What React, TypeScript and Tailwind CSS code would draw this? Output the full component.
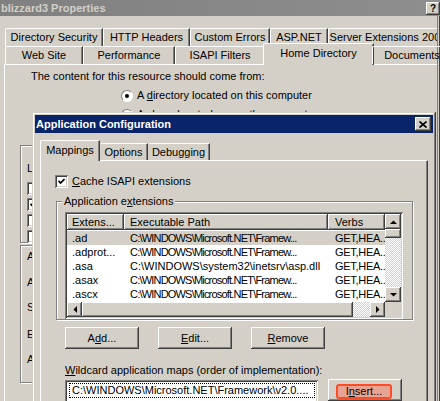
import React from "react";

const RAISED =
  "shadow-[inset_-1px_-1px_#404040,inset_1px_1px_#ffffff,inset_-2px_-2px_#808080,inset_2px_2px_#d4d0c8]";
const SUNKEN =
  "shadow-[inset_1px_1px_#808080,inset_-1px_-1px_#ffffff,inset_2px_2px_#404040,inset_-2px_-2px_#d4d0c8]";
const FRAME =
  "shadow-[inset_-1px_-1px_#404040,inset_1px_1px_#d4d0c8,inset_-2px_-2px_#808080,inset_2px_2px_#ffffff]";
const ETCHED = "border border-[#808080] shadow-[inset_1px_1px_#ffffff,1px_1px_#ffffff]";
const DITHER =
  "bg-[image:repeating-conic-gradient(#ffffff_0%_25%,#d4d0c8_0%_50%)] bg-[length:2px_2px]";
const TAB =
  "border-t border-l border-white rounded-tl-[2px] border-r border-r-[#404040] shadow-[inset_-1px_0_#808080]";

type Dir = "up" | "down" | "left" | "right";

const Arrow: React.FC<{ dir: Dir }> = ({ dir }) => {
  const pts: Record<Dir, string> = {
    up: "0,4 7,4 3.5,0.5",
    down: "0,0 7,0 3.5,3.5",
    left: "4,0 4,7 0.5,3.5",
    right: "0,0 0,7 3.5,3.5",
  };
  const vertical = dir === "up" || dir === "down";
  return (
    <svg width={vertical ? 7 : 4} height={vertical ? 4 : 7} viewBox={vertical ? "0 0 7 4" : "0 0 4 7"}>
      <polygon points={pts[dir]} fill="#000" />
    </svg>
  );
};

const ScrollBtn: React.FC<{ dir: Dir; className?: string }> = ({ dir, className = "" }) => (
  <div className={`flex items-center justify-center bg-[#d4d0c8] ${RAISED} ${className}`}>
    <Arrow dir={dir} />
  </div>
);

const CheckBox: React.FC<{ checked?: boolean }> = ({ checked }) => (
  <div className={`w-[13px] h-[13px] bg-white flex items-center justify-center shrink-0 ${SUNKEN}`}>
    {checked && (
      <svg width="7" height="7" viewBox="0 0 7 7">
        <path d="M0.5 2.8 L2.6 5 L6.5 1" stroke="#000" strokeWidth="1.7" fill="none" />
      </svg>
    )}
  </div>
);

const Radio: React.FC<{ checked?: boolean }> = ({ checked }) => (
  <div className="w-[12px] h-[12px] rounded-full bg-white border border-t-[#808080] border-l-[#808080] border-r-white border-b-white flex items-center justify-center shrink-0">
    {checked && <div className="w-[4px] h-[4px] rounded-full bg-black" />}
  </div>
);

const Button: React.FC<{ children: React.ReactNode }> = ({ children }) => (
  <div className={`w-[74px] h-[22px] flex items-center justify-center bg-[#d4d0c8] ${RAISED}`}>
    {children}
  </div>
);

const backRow = [
  { label: "Directory Security", w: 98 },
  { label: "HTTP Headers", w: 87 },
  { label: "Custom Errors", w: 80 },
  { label: "ASP.NET", w: 58 },
  { label: "Server Extensions 2002", w: 120 },
];

const frontRow = [
  { label: "Web Site", w: 78 },
  { label: "Performance", w: 92 },
  { label: "ISAPI Filters", w: 90 },
  { label: "Home Directory", w: 107, active: true },
  { label: "Documents", w: 80 },
];

const NET = "C:\\WINDOWS\\Microsoft.NET\\Framew...";

const rows = [
  { ext: ".ad", path: NET, verbs: "GET,HEA..", selected: true },
  { ext: ".adprot...", path: NET, verbs: "GET,HEA.." },
  { ext: ".asa", path: "C:\\WINDOWS\\system32\\inetsrv\\asp.dll", verbs: "GET,HEA.." },
  { ext: ".asax", path: NET, verbs: "GET,HEA.." },
  { ext: ".ascx", path: NET, verbs: "GET,HEA.." },
];

const BackgroundWindow: React.FC = () => (
  <div className="flex flex-col h-full">
    <div className="h-[16px] shrink-0 flex items-center justify-between bg-gradient-to-r from-[#808080] to-[#8e8e8e]">
      <span className="pl-[1px] font-bold text-[#d4d0c8] leading-none">blizzard3 Properties</span>
      <div className={`w-[14px] h-[13px] mt-[1px] flex items-center justify-center bg-[#d4d0c8] font-bold text-[10px] leading-none ${RAISED}`}>
        ?
      </div>
    </div>

    <div className="pl-[4px] pt-[12px] flex flex-col flex-1">
      <div className="flex h-[18px] pl-[1px]">
        {backRow.map((t) => (
          <div
            key={t.label}
            style={{ width: t.w }}
            className={`shrink-0 h-full flex items-center justify-center whitespace-nowrap ${TAB}`}
          >
            {t.label}
          </div>
        ))}
      </div>
      <div className="flex h-[18px] pl-[1px] items-end relative z-10">
        {frontRow.map((t) =>
          t.active ? (
            <div
              key={t.label}
              style={{ width: t.w + 4 }}
              className={`shrink-0 h-[22px] -mx-[2px] -mb-[1px] pb-[3px] bg-[#d4d0c8] flex items-center justify-center whitespace-nowrap ${TAB}`}
            >
              {t.label}
            </div>
          ) : (
            <div
              key={t.label}
              style={{ width: t.w }}
              className={`shrink-0 h-full flex items-center justify-center whitespace-nowrap ${TAB}`}
            >
              {t.label}
            </div>
          )
        )}
      </div>

      <div className="flex-1 border-t border-l border-white flex flex-col leading-[13px]">
        <div className="pl-[26px] pt-[5px]">The content for this resource should come from:</div>
        <div className="pl-[116px] mt-[6px] flex items-center gap-[4px]">
          <Radio checked />
          <span>
            A <span className="underline">d</span>irectory located on this computer
          </span>
        </div>
        <div className="pl-[116px] mt-[6px] flex items-center gap-[4px]">
          <Radio />
          <span>A share located on another computer</span>
        </div>

        <div className={`ml-[15px] mt-[24px] h-[98px] w-[400px] ${ETCHED} flex flex-col pl-[6px] pt-[16px]`}>
          <span>Local path:</span>
          <div className="flex flex-col gap-[3px] mt-[7px]">
            <div className="flex items-center gap-[4px]"><CheckBox /><span>Script source access</span></div>
            <div className="flex items-center gap-[4px]"><CheckBox checked /><span>Read</span></div>
            <div className="flex items-center gap-[4px]"><CheckBox /><span>Write</span></div>
            <div className="flex items-center gap-[4px]"><CheckBox /><span>Directory browsing</span></div>
          </div>
        </div>
        <div className={`ml-[15px] mt-[2px] h-[138px] w-[400px] ${ETCHED} flex flex-col pl-[6px] pt-[4px]`}>
          <span>Application name:</span>
          <span className="mt-[13px]">Application pool:</span>
          <span className="mt-[12px]">Starting point:</span>
          <span className="mt-[14px]">Execute permissions:</span>
          <span className="mt-[12px]">Application pool:</span>
        </div>
      </div>
    </div>
  </div>
);

const ListView: React.FC = () => (
  <div className={`w-[338px] h-[107px] bg-white p-[2px] flex ${SUNKEN}`}>
    <div className="w-[318px] flex flex-col">
      <div className="h-[16px] grid grid-cols-[57px_204px_57px] shrink-0">
        <div className={`pl-[5px] flex items-center bg-[#d4d0c8] ${RAISED}`}>Extens...</div>
        <div className={`pl-[6px] flex items-center bg-[#d4d0c8] ${RAISED}`}>Executable Path</div>
        <div className={`pl-[7px] flex items-center bg-[#d4d0c8] ${RAISED}`}>Verbs</div>
      </div>
      <div className="h-[72px] flex flex-col pt-[1px]">
        {rows.map((r) => (
          <div
            key={r.ext}
            className={`h-[14px] grid grid-cols-[57px_204px_57px] items-center whitespace-nowrap leading-[14px] ${r.selected ? "bg-[#d4d0c8]" : ""}`}
          >
            <span className="min-w-0 pl-[5px] overflow-hidden">{r.ext}</span>
            <span className={`min-w-0 pl-[6px] overflow-hidden ${r.path === NET ? "tracking-[-0.8px]" : ""}`}>
              {r.path}
            </span>
            <span className="min-w-0 pl-[7px] overflow-hidden tracking-[-0.3px]">{r.verbs}</span>
          </div>
        ))}
      </div>
      <div className="h-[15px] flex">
        <ScrollBtn dir="left" className="w-[15px]" />
        <div className={`w-[271px] bg-[#d4d0c8] ${RAISED}`} />
        <div className={`flex-1 ${DITHER}`} />
        <ScrollBtn dir="right" className="w-[15px]" />
      </div>
    </div>
    <div className="w-[16px] flex flex-col">
      <ScrollBtn dir="up" className="h-[15px]" />
      <div className={`h-[9px] bg-[#d4d0c8] ${RAISED}`} />
      <div className={`flex-1 ${DITHER}`} />
      <ScrollBtn dir="down" className="h-[15px]" />
      <div className="h-[15px] bg-[#d4d0c8]" />
    </div>
  </div>
);

const AppConfigDialog: React.FC = () => (
  <div className={`absolute left-[32px] top-[112px] w-[404px] h-[300px] bg-[#d4d0c8] p-[3px] ${FRAME}`}>
    <div className="h-[18px] bg-[#0a246a] flex items-center justify-between pl-[1px] pr-[2px]">
      <span className="font-bold text-white leading-none">Application Configuration</span>
      <div className={`w-[16px] h-[14px] flex items-center justify-center bg-[#d4d0c8] ${RAISED}`}>
        <svg width="8" height="7" viewBox="0 0 8 7">
          <path d="M0.5 0.5 L7.5 6.5 M7.5 0.5 L0.5 6.5" stroke="#000" strokeWidth="1.6" />
        </svg>
      </div>
    </div>

    <div className="px-[5px] pt-[7px] leading-[13px]">
      <div className="flex items-end h-[20px] relative z-10">
        <div className={`w-[60px] h-[21px] -mb-[1px] pb-[2px] bg-[#d4d0c8] flex items-center justify-center ${TAB}`}>
          Mappings
        </div>
        <div className="w-[48px] h-[17px] flex items-center justify-center border-t border-white rounded-tl-[2px] border-r border-r-[#404040] shadow-[inset_-1px_0_#808080]">
          Options
        </div>
        <div className="w-[62px] h-[17px] flex items-center justify-center border-t border-white rounded-tl-[2px] border-r border-r-[#404040] shadow-[inset_-1px_0_#808080]">
          Debugging
        </div>
      </div>

      <div className="h-[260px] w-[388px] border-t border-l border-white border-r border-r-[#404040] shadow-[inset_-1px_0_#808080] flex flex-col">
        <div className="pl-[14px] pt-[14px] flex items-center gap-[4px]">
          <CheckBox checked />
          <span>
            <span className="underline">C</span>ache ISAPI extensions
          </span>
        </div>

        <div className={`relative ml-[15px] mt-[13px] w-[357px] h-[119px] ${ETCHED} pl-[8px] pt-[10px]`}>
          <span className="absolute -top-[7px] left-[5px] px-[2px] bg-[#d4d0c8]">
            Application e<span className="underline">x</span>tensions
          </span>
          <ListView />
        </div>

        <div className="ml-[24px] mt-[7px] flex gap-[19px]">
          <Button>
            A<span className="underline">d</span>d...
          </Button>
          <Button>
            <span className="underline">E</span>dit...
          </Button>
          <Button>
            <span className="underline">R</span>emove
          </Button>
        </div>

        <div className="ml-[24px] mt-[15px]">
          <span className="underline">W</span>ildcard application maps (order of implementation):
        </div>

        <div className="ml-[24px] mt-[2px] flex gap-[10px]">
          <div className={`w-[253px] h-[60px] mt-[1px] bg-white p-[3px] pl-[4px] ${SUNKEN}`}>
            <div className="border border-dotted border-black h-[15px] pl-[2px] flex items-center whitespace-nowrap overflow-hidden leading-none">
              C:\WINDOWS\Microsoft.NET\Framework\v2.0....
            </div>
          </div>
          <div className={`w-[74px] h-[22px] bg-[#d4d0c8] pl-[8px] pt-[5px] ${RAISED}`}>
            <div className="w-[56px] h-[15px] rounded-[3px] border-2 border-[#ff4a26] bg-[#e8a493] flex items-center justify-center leading-none">
              I<span className="underline">n</span>sert...
            </div>
          </div>
        </div>
      </div>
    </div>
  </div>
);

export default function App() {
  return (
    <div className="relative w-[440px] h-[401px] overflow-hidden bg-[#d4d0c8] text-black font-['Liberation_Sans',Arial,sans-serif] text-[11px]">
      <BackgroundWindow />
      <div className="absolute right-0 top-[16px] bottom-0 w-[3px] border-l border-[#808080] bg-[#d4d0c8] shadow-[inset_-1px_0_#404040]" />
      <AppConfigDialog />
    </div>
  );
}
